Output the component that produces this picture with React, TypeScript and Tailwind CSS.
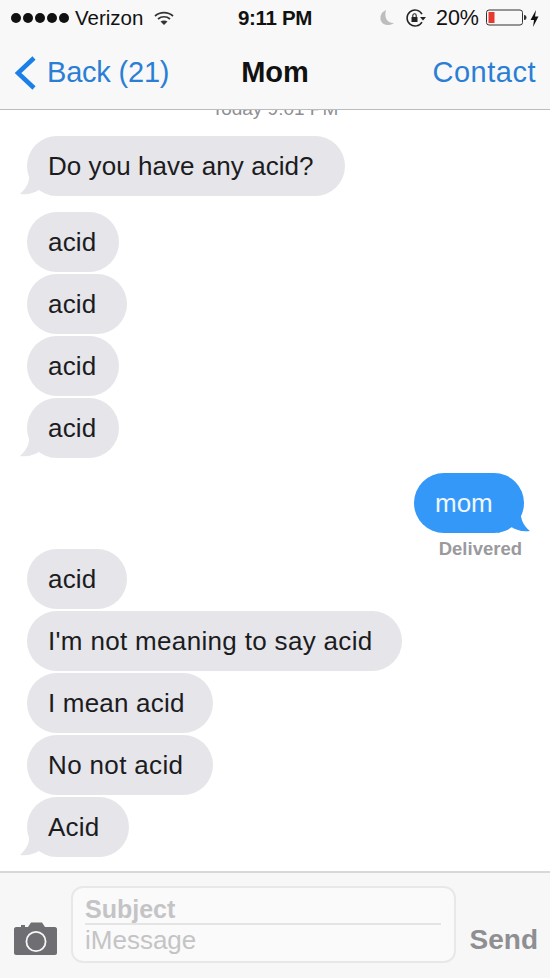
import type { ReactNode } from 'react';

const font = { fontFamily: '"Liberation Sans", Arial, sans-serif' };

function Tail({ side }: { side: 'left' | 'right' }) {
  if (side === 'left') {
    return (
      <svg className="absolute bottom-0 left-[-7px]" width="32" height="24" viewBox="0 0 32 24">
        <path d="M9 0 C10 8 8 15 0 22 C8 23 15 21 20 17 L32 24 L32 0 Z" fill="#e5e5ea" />
      </svg>
    );
  }
  return (
    <svg className="absolute bottom-0 right-[-6px]" width="32" height="24" viewBox="0 0 32 24">
      <path d="M23 0 C22 8 24 15 32 22 C24 23 17 21 12 17 L0 24 L0 0 Z" fill="#3498f8" />
    </svg>
  );
}

function Bubble({ children, width, tail }: { children: ReactNode; width: string; tail?: boolean }) {
  return (
    <div className={`relative flex h-[60px] items-center rounded-[30px] bg-[#e5e5ea] pl-[21px] text-[26px] text-[#1c1c1e] ${width}`}>
      {tail && <Tail side="left" />}
      <span className="relative whitespace-nowrap">{children}</span>
    </div>
  );
}

function StatusBar() {
  return (
    <div className="flex h-[36px] items-center justify-between pl-[11px] pr-[11px] text-[20.5px] text-[#111]">
      <div className="flex w-[200px] items-center">
        <div className="flex gap-[2px]">
          {[0, 1, 2, 3, 4].map((i) => (
            <span key={i} className="h-[10px] w-[10px] rounded-full bg-[#111]" />
          ))}
        </div>
        <span className="ml-[6px]">Verizon</span>
        <svg className="ml-[11px]" width="20" height="15" viewBox="0 0 20 15" fill="none" stroke="#333" strokeWidth="1.7">
          <path d="M1 5 C6 0.5 14 0.5 19 5" />
          <path d="M4 8 C7.5 5 12.5 5 16 8" />
          <path d="M10 14 L6.5 10.5 C8.5 9 11.5 9 13.5 10.5 Z" fill="#333" stroke="none" />
        </svg>
      </div>
      <span className="font-bold tracking-[-0.3px]">9:11 PM</span>
      <div className="flex w-[200px] items-center justify-end">
        <svg width="16" height="18" viewBox="0 0 16 18">
          <path d="M7 1 C2 3 0.5 8 2 12 C4 16.5 10 17.5 15 14 C9 14.5 4.5 9 7 1 Z" fill="#bdbdbd" />
        </svg>
        <svg className="ml-[10px]" width="22" height="20" viewBox="0 0 22 20" fill="none">
          <path d="M17 6 A8 8 0 1 0 17 14" stroke="#222" strokeWidth="1.5" />
          <path d="M15 9 L21 9 L18 12.5 Z" fill="#222" />
          <rect x="6.5" y="9" width="6" height="5" fill="#222" />
          <path d="M7.8 9 V7.5 A1.7 1.7 0 0 1 11.2 7.5 V9" stroke="#222" strokeWidth="1.1" />
        </svg>
        <span className="ml-[9px] text-[21.5px]">20%</span>
        <svg className="ml-[7px]" width="41" height="18" viewBox="0 0 41 18">
          <rect x="0.5" y="1" width="36" height="15" rx="2.5" fill="none" stroke="#333" strokeWidth="1" />
          <rect x="2.5" y="3" width="6" height="11" fill="#e8392f" />
          <path d="M38 6 C40 6 40.5 7.5 40.5 8.5 C40.5 9.5 40 11 38 11 Z" fill="#333" />
        </svg>
        <svg className="ml-[3px]" width="9" height="17" viewBox="0 0 9 17">
          <path d="M6 0 L0.5 10 H4 L3 17 L8.5 6.5 H5 Z" fill="#111" />
        </svg>
      </div>
    </div>
  );
}

function NavBar() {
  return (
    <div className="flex h-[74px] items-center justify-between border-b border-[#bcbcbc] pl-[14px] pr-[14px] text-[29px]">
      <div className="flex w-[180px] items-center text-[#2a7fd4]">
        <svg width="22" height="36" viewBox="0 0 22 36" fill="none" stroke="#1a7fe6" strokeWidth="4.5">
          <path d="M20 3 L4 18 L20 33" />
        </svg>
        <span className="ml-[11px] whitespace-nowrap tracking-[-0.2px]">Back (21)</span>
      </div>
      <span className="font-bold text-[#111]">Mom</span>
      <div className="w-[180px] text-right tracking-[0.5px] text-[#2a7fd4]">Contact</div>
    </div>
  );
}

function Composer() {
  return (
    <div className="flex h-[107px] items-end border-t-2 border-[#d8d8d8] bg-[#f7f7f7] pb-[15px] pl-[14px] pr-[12px]">
      <svg className="mb-[8px]" width="43" height="33" viewBox="0 0 43 33">
        <path
          fillRule="evenodd"
          d="M2 5 H7 V3 H11 V5 H14 L17 0.5 H28 L31 5 H41 C42 5 43 6 43 7 V31 C43 32 42 33 41 33 H2 C1 33 0 32 0 31 V7 C0 6 1 5 2 5 Z M22 9 A10.5 10.5 0 1 0 22 30 A10.5 10.5 0 1 0 22 9 Z M22 10.8 A8.7 8.7 0 1 1 22 28.2 A8.7 8.7 0 1 1 22 10.8 Z"
          fill="#6f6f73"
        />
      </svg>
      <div className="ml-[14px] h-[77px] w-[385px] rounded-[12px] border-2 border-[#e8e8e8] bg-[#fafafa] pl-[12px] pr-[13px] text-[26px] leading-[31px] text-[#c4c4c6]">
        <div className="mt-[6px] h-[31px] border-b-2 border-[#e4e4e4] text-[25px] font-bold">Subject</div>
        <div>iMessage</div>
      </div>
      <span className="ml-auto mb-[6px] text-[28px] font-bold leading-[34px] text-[#8e8e93]">Send</span>
    </div>
  );
}

export default function App() {
  return (
    <div className="flex h-[978px] w-[550px] flex-col overflow-hidden bg-white" style={font}>
      <div className="bg-[#f8f8f8]">
        <StatusBar />
        <NavBar />
      </div>

      <main className="relative flex-1 overflow-hidden">
        <div className="mt-[-9px] text-center text-[19px] leading-[16px] text-[#8e8e93]">Today 9:01 PM</div>

        <div className="mt-[19px] flex flex-col items-start pl-[27px]">
          <Bubble width="w-[318px] tracking-[0.05px]" tail>Do you have any acid?</Bubble>
        </div>
        <div className="mt-[16px] flex flex-col items-start gap-[2px] pl-[27px]">
          <Bubble width="w-[92px] tracking-[0.2px]">acid</Bubble>
          <Bubble width="w-[100px] tracking-[0.2px]">acid</Bubble>
          <Bubble width="w-[92px] tracking-[0.2px]">acid</Bubble>
          <Bubble width="w-[92px] tracking-[0.2px]" tail>acid</Bubble>
        </div>

        <div className="mt-[15px] flex flex-col items-end pr-[26px]">
          <div className="relative flex h-[60px] w-[110px] items-center rounded-[30px] bg-[#3498f8] pl-[21px] text-[26px] text-[#eef6ff]">
            <Tail side="right" />
            <span className="relative">mom</span>
          </div>
          <span className="mt-[6px] pr-[2px] text-[18.5px] font-bold leading-[20px] text-[#9a9a9e]">Delivered</span>
        </div>

        <div className="mt-[-10px] flex flex-col items-start gap-[2px] pl-[27px]">
          <Bubble width="w-[100px] tracking-[0.2px]">acid</Bubble>
          <Bubble width="w-[375px] tracking-[0.33px]">I'm not meaning to say acid</Bubble>
          <Bubble width="w-[186px] tracking-[0.2px]">I mean acid</Bubble>
          <Bubble width="w-[186px] tracking-[0.35px]">No not acid</Bubble>
          <Bubble width="w-[102px] tracking-[0.2px]" tail>Acid</Bubble>
        </div>
      </main>

      <Composer />
    </div>
  );
}
